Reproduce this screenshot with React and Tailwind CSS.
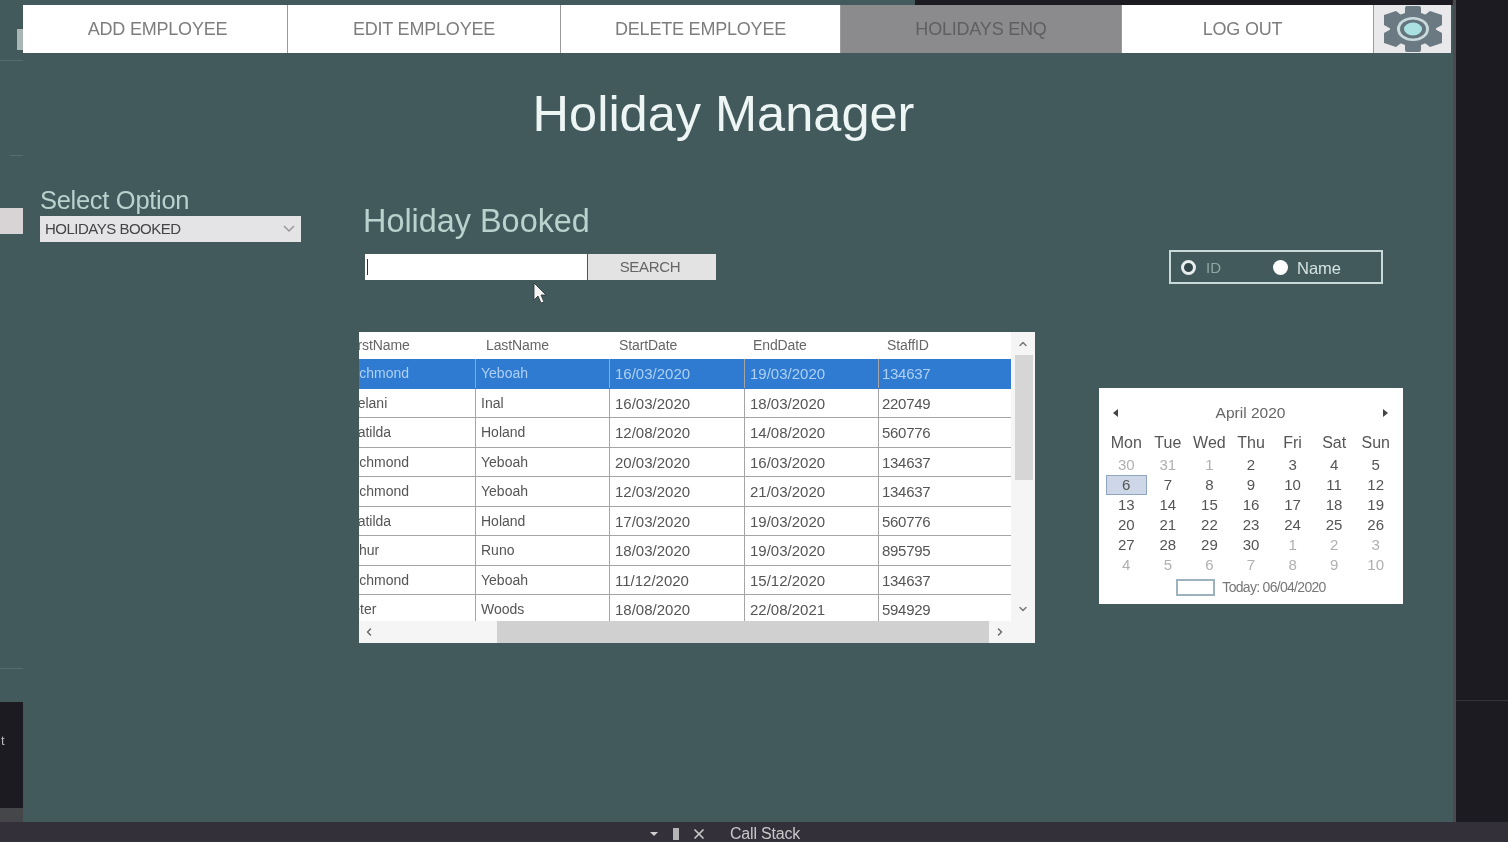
import { X, ChevronUp, ChevronDown, ChevronLeft, ChevronRight } from 'lucide-react'

const rows = [
  ['Richmond', 'Yeboah', '16/03/2020', '19/03/2020', '134637'],
  ['Melani', 'Inal', '16/03/2020', '18/03/2020', '220749'],
  ['Matilda', 'Holand', '12/08/2020', '14/08/2020', '560776'],
  ['Richmond', 'Yeboah', '20/03/2020', '16/03/2020', '134637'],
  ['Richmond', 'Yeboah', '12/03/2020', '21/03/2020', '134637'],
  ['Matilda', 'Holand', '17/03/2020', '19/03/2020', '560776'],
  ['Arthur', 'Runo', '18/03/2020', '19/03/2020', '895795'],
  ['Richmond', 'Yeboah', '11/12/2020', '15/12/2020', '134637'],
  ['Peter', 'Woods', '18/08/2020', '22/08/2021', '594929'],
]

const days = [
  [30, 31, 1, 2, 3, 4, 5],
  [6, 7, 8, 9, 10, 11, 12],
  [13, 14, 15, 16, 17, 18, 19],
  [20, 21, 22, 23, 24, 25, 26],
  [27, 28, 29, 30, 1, 2, 3],
  [4, 5, 6, 7, 8, 9, 10],
]

function NavButton({ label, width, active, nudge }) {
  return (
    <div
      className={`flex h-full items-center justify-center text-[18px] tracking-[-0.2px] ${width} ${nudge || ''} ${
        active ? 'bg-[#8b8a8c] text-[#5f5f62]' : 'bg-white text-[#7d7d7d]'
      }`}
    >
      {label}
    </div>
  )
}

function Gear() {
  return (
    <svg viewBox="0 0 64 46" preserveAspectRatio="none" className="h-[46px] w-[64px]">
      <g fill="#6b7a82">
        <rect x="24" y="0" width="16" height="46" rx="2" />
        <path d="M3 9 L15 5 L24 12 L12 24 L3 19 Z" />
        <path d="M61 9 L49 5 L40 12 L52 24 L61 19 Z" />
        <path d="M3 37 L15 41 L24 34 L12 22 L3 27 Z" />
        <path d="M61 37 L49 41 L40 34 L52 22 L61 27 Z" />
        <ellipse cx="32" cy="23" rx="23" ry="17" />
      </g>
      <ellipse cx="32" cy="23" rx="16" ry="12" fill="#c9dadd" />
      <ellipse cx="32" cy="23" rx="13" ry="9.5" fill="#64757d" />
      <ellipse cx="32" cy="23" rx="9" ry="6.5" fill="#a9e2e0" />
    </svg>
  )
}

function Table() {
  return (
    <div className="mt-[52px] flex h-[311px] w-[676px] flex-col bg-white">
      <div className="flex min-h-0 flex-1">
        <div className="flex w-[652px] flex-col overflow-hidden">
          <div className="flex h-[27px] shrink-0 items-center text-[14px] tracking-[-0.1px] text-[#666]">
            <div className="w-[116px] overflow-hidden whitespace-nowrap"><span className="ml-[-13px] inline-block">FirstName</span></div>
            <div className="w-[134px] pl-[11px]">LastName</div>
            <div className="w-[135px] pl-[10px]">StartDate</div>
            <div className="w-[134px] pl-[9px]">EndDate</div>
            <div className="w-[133px] pl-[9px]">StaffID</div>
          </div>
          {rows.map((r, i) => (
            <div
              key={i}
              className={`flex h-[29.5px] shrink-0 items-center border-b text-[14px] ${
                i === 0 ? 'border-[#2f7bd2] bg-[#2f7bd2] text-[#aed0f2]' : 'border-[#a5a5a5] text-[#555]'
              }`}
            >
              <div className="h-full w-[116px] overflow-hidden whitespace-nowrap leading-[29px]">
                <span className={`inline-block ${r[0] === 'Arthur' ? 'ml-[-18px]' : r[0] === 'Peter' ? 'ml-[-16px]' : 'ml-[-13px]'}`}>{r[0]}</span>
              </div>
              <div className="h-full w-[134px] border-l border-[#a5a5a5] pl-[5px] leading-[29px]">{r[1]}</div>
              <div className="h-full w-[135px] border-l border-[#a5a5a5] pl-[5px] text-[15px] leading-[29px]">{r[2]}</div>
              <div className="h-full w-[134px] border-l border-[#a5a5a5] pl-[5px] text-[15px] leading-[29px]">{r[3]}</div>
              <div className="h-full w-[133px] border-l border-[#a5a5a5] pl-[3px] text-[15px] tracking-[-0.3px] leading-[29px]">{r[4]}</div>
            </div>
          ))}
        </div>
        {/* vertical scrollbar */}
        <div className="flex w-[24px] flex-col items-center bg-[#f5f5f5] text-[#7a7a7a]">
          <ChevronUp size={12} strokeWidth={3} className="mt-[6px] shrink-0" />
          <div className="mt-[5px] mr-[2px] h-[125px] w-[18px] shrink-0 self-end bg-[#d6d6d6]" />
          <ChevronDown size={12} strokeWidth={3} className="mt-[123px] shrink-0" />
        </div>
      </div>
      <div className="flex h-[22px] items-center bg-[#f5f5f5] text-[#6a6a6a]">
        <ChevronLeft size={12} strokeWidth={3} className="ml-[4px] shrink-0" />
        <div className="ml-[122px] h-full w-[492px] shrink-0 bg-[#d0d0d0]" />
        <ChevronRight size={12} strokeWidth={3} className="ml-[5px] shrink-0" />
      </div>
    </div>
  )
}

function Calendar() {
  return (
    <div className="mt-[104px] ml-[-70px] flex h-[216px] w-[304px] flex-col items-center bg-white px-[6px] text-[#555]">
      <div className="mt-[15px] flex h-[20px] w-full items-center justify-between pl-[8px] pr-[9px] text-[15.5px] text-[#666]">
        <span className="h-0 w-0 border-y-[4px] border-r-[5px] border-y-transparent border-r-[#444]" />
        <span>April 2020</span>
        <span className="h-0 w-0 border-y-[4px] border-l-[5px] border-y-transparent border-l-[#444]" />
      </div>
      <div className="mt-[10px] grid w-[291px] grid-cols-7 text-center text-[15px] leading-[20px]">
        {['Mon', 'Tue', 'Wed', 'Thu', 'Fri', 'Sat', 'Sun'].map((d) => (
          <div key={d} className="text-[16px]">{d}</div>
        ))}
        <div className="col-span-7 h-[2px]" />
        {days.map((week, w) =>
          week.map((d, i) => {
            const muted = (w === 0 && i < 3) || (w === 4 && i > 3) || w === 5
            return (
              <div
                key={`${w}-${i}`}
                className={`h-[20px] ${muted ? 'text-[#b0b0b0]' : ''} ${
                  w === 1 && i === 0 ? 'border border-[#8fa5c0] bg-[#cdd7e8] leading-[18px]' : ''
                }`}
              >
                {d}
              </div>
            )
          }),
        )}
      </div>
      <div className="mt-[3px] flex h-[18px] items-center gap-[7px] text-[#777]">
        <span className="h-[17px] w-[39px] border-2 border-[#9db2bf]" />
        <span className="text-[14px] tracking-[-0.7px]">Today: 06/04/2020</span>
      </div>
    </div>
  )
}

export default function App() {
  return (
    <div className="relative flex h-[842px] w-[1508px] flex-col overflow-hidden bg-[#1c1b21] blur-[0.6px] font-['Liberation_Sans',Arial,sans-serif]">
      <div className="flex h-[822px]">
        {/* left edge of the ide behind */}
        <div className="flex w-[23px] flex-col bg-[#425a5c]">
          <div className="mt-[29px] ml-[17px] h-[21px] w-[6px] bg-[#a9b6b6]" />
          <div className="mt-[10px] h-px bg-[#566d6f]" />
          <div className="mt-[94px] ml-[10px] h-px w-[13px] bg-[#566d6f]" />
          <div className="mt-[52px] h-[26px] bg-[#d8d4d6]" />
          <div className="mt-[434px] h-px bg-[#566d6f]" />
          <div className="mt-[33px] h-[106px] bg-[#1c1b21] pt-[31px] pl-[1px] text-[13px] leading-[16px] text-[#bbb]">t</div>
          <div className="h-[14px] bg-[#45464a]" />
        </div>

        <div className="flex w-[1430px] flex-col bg-[#425a5c]">
          <div className="flex h-[5px] shrink-0">
            <div className="w-[892px]" />
            <div className="flex-1 bg-[#1c1b21]" />
          </div>
          <div className="flex h-[48px] w-[1428px] shrink-0 gap-px bg-[#9a9a9a]">
            <NavButton label="ADD EMPLOYEE" width="w-[264px]" nudge="pl-[5px]" />
            <NavButton label="EDIT EMPLOYEE" width="w-[272px]" />
            <NavButton label="DELETE EMPLOYEE" width="w-[279px]" />
            <NavButton label="HOLIDAYS ENQ" width="w-[280px]" active />
            <NavButton label="LOG OUT" width="w-[251px]" nudge="pr-[10px]" />
            <div className="flex flex-1 items-center justify-center bg-[#e9e9ec]">
              <Gear />
            </div>
          </div>

          <h1 className="mt-[31px] h-[59px] w-[1401px] text-center text-[50.5px] leading-[60px] text-[#eef5f5]">
            Holiday Manager
          </h1>

          <div className="flex">
            <div className="ml-[17px] w-[261px] pt-[43px]">
              <div className="h-[30px] whitespace-nowrap text-[25.5px] leading-[28px] tracking-[-0.3px] text-[#b9d2cd]">Select Option</div>
              <div className="flex h-[26px] items-center justify-between bg-[#e4e4e6] px-[5px] text-[15px] tracking-[-0.5px] text-[#444]">
                <span>HOLIDAYS BOOKED</span>
                <svg viewBox="0 0 12 8" className="mr-[1px] h-[8px] w-[12px]" fill="none" stroke="#999" strokeWidth="1.5">
                  <path d="M1 1l5 5 5-5" />
                </svg>
              </div>
            </div>

            <div className="ml-[58px] w-[676px] pt-[59px]">
              <div className="ml-[4px] h-[38px] text-[32.4px] leading-[38px] text-[#b9d2cd]">Holiday Booked</div>
              <div className="mt-[14px] ml-[6px] flex h-[26px] gap-px">
                <div className="flex w-[222px] items-center bg-white pl-[2px]">
                  <span className="h-[16px] w-px bg-[#333]" />
                </div>
                <div className="flex w-[128px] items-center justify-center bg-[#e3e3e3] pr-[4px] pt-[1px] text-[15px] tracking-[-0.3px] text-[#666]">SEARCH</div>
              </div>
              <Table />
            </div>

            <div className="ml-[134px] w-[214px] pt-[107px]">
              <div className="flex h-[34px] items-center border-2 border-[#c9d9d8] text-[15px]">
                <span className="ml-[10px] h-[15px] w-[15px] shrink-0 rounded-full border-[3px] border-[#e8eeee] bg-[#33464a]" />
                <span className="ml-[10px] mt-[2px] w-[60px] text-[#8fa8a6]">ID</span>
                <span className="ml-[7px] h-[15px] w-[15px] shrink-0 rounded-full bg-white" />
                <span className="ml-[9px] mt-[2px] text-[16.5px] text-[#d5e3e1]">Name</span>
              </div>
              <Calendar />
            </div>
          </div>
        </div>

        <div className="flex flex-1 flex-col border-l-[3px] border-[#4a4a50]">
          <div className="mt-[700px] h-px bg-[#34343a]" />
        </div>
      </div>

      <div className="relative flex h-[20px] items-center overflow-hidden bg-[#33303a] pl-[650px] pt-[4px] text-[#c8c8c8]">
        <span className="h-0 w-0 border-x-[4px] border-t-[4px] border-x-transparent border-t-[#cfcfcf]" />
        <span className="ml-[15px] h-[12px] w-[6px] bg-[#b5b5b5]" />
        <X size={16} strokeWidth={2.6} className="ml-[12px]" />
        <span className="ml-[23px] text-[16px] tracking-[-0.2px]">Call Stack</span>
      </div>

      {/* mouse cursor over the form */}
      <svg viewBox="0 0 14 22" className="absolute left-[533px] top-[282px] h-[22px] w-[14px]">
        <path d="M1 1v17l4-4 3 7 3-1-3-7h5z" fill="#f4f4f4" stroke="#2a3436" strokeWidth="0.8" />
      </svg>
    </div>
  )
}
